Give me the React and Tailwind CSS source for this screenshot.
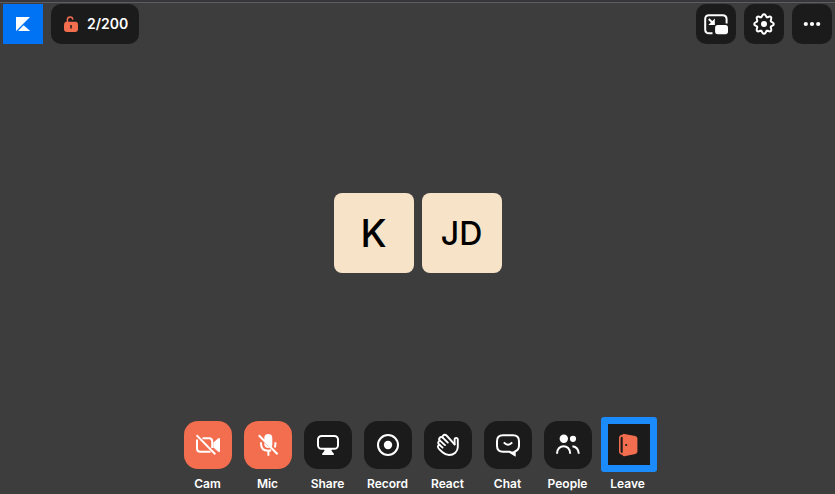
import clsx from 'clsx';

// ── Icons ──────────────────────────────────────────────────────────────────
const Icon = ({ children, className = 'w-6 h-6' }) => (
  <svg
    viewBox="0 0 24 24"
    fill="none"
    stroke="currentColor"
    strokeWidth="2"
    className={clsx('block shrink-0', className)}
    aria-hidden="true"
  >
    {children}
  </svg>
);

const CamOffIcon = () => (
  <Icon>
    <path d="M0.5 2.2 19.3 21.3" />
    <path d="M1 6.5V15.5Q1 18.7 4.2 18.7H14.5" />
    <path d="M6.5 5.3H13Q16.2 5.3 16.2 8.5V15" />
    <path d="M17.3 9.5 22.3 5.2Q24 4.3 24 6V18Q24 19.7 22.3 18.8L17.3 14.5Z" fill="currentColor" stroke="none" />
  </Icon>
);

const MicOffIcon = () => (
  <Icon>
    <path d="M8.3 7V5A4 4 0 0 1 16.3 5V12L15.8 14.2Z" fill="currentColor" stroke="none" />
    <path d="M8.3 9.5 13.8 15Q8.3 15.6 8.3 11Z" fill="currentColor" stroke="none" />
    <path d="M2.8 2.2 21.6 21.3" />
    <path d="M5 9.3V10.5Q5 17.7 12 17.7Q13.6 17.7 15 17.2M12.4 17.5V22.7M19.4 9.3V11Q19.4 13 18.6 14.5" />
  </Icon>
);

const ShareIcon = () => (
  <Icon>
    <rect x="2" y="3" width="20" height="12.8" rx="3.6" />
    <path d="M8.4 16H15.6V18L17.8 20.6V22H6.2V20.6L8.4 18Z" fill="currentColor" stroke="none" />
  </Icon>
);

const RecordIcon = () => (
  <Icon>
    <circle cx="12" cy="12" r="10" />
    <circle cx="12" cy="12" r="4.2" fill="currentColor" stroke="none" />
  </Icon>
);

const WaveIcon = () => (
  <Icon>
    <g strokeWidth="1.9" strokeLinecap="round" strokeLinejoin="round">
      <path d="M18.6 11.4 11 3Q8.8 0.9 7 2.6Q6 3.6 6.8 4.6L11.8 9.6" />
      <path d="M6.8 4.6Q5 3.2 3.6 4.8Q2.4 6 4 7.6L9 12.1" />
      <path d="M4 7.6Q2.6 7.8 2.2 9.4Q2 10.6 3.4 11.8L6.6 14.6" />
      <path d="M3.4 11.8Q1.8 12.2 1.9 13.8Q2 15 3.4 16.4L6.5 19.3Q9.5 22 13 22C18 22 21.8 18.5 21.8 14V6.5A1.6 1.6 0 0 0 18.6 6.5V11.4" />
    </g>
  </Icon>
);

const ChatIcon = () => (
  <Icon>
    <path d="M7 2.3H17Q23 2.3 23 8.3V12.8Q23 17 18.6 18.6V22L13.6 18.8H7Q1 18.8 1 12.8V8.3Q1 2.3 7 2.3Z" />
    <path d="M14 18.5H19.3V23Z" fill="currentColor" stroke="none" />
    <path d="M7.8 9.3Q12 14 16.2 9.3" />
  </Icon>
);

const PeopleIcon = () => (
  <Icon>
    <circle cx="7.8" cy="5.8" r="4.2" fill="currentColor" stroke="none" />
    <circle cx="17" cy="5.8" r="3.1" fill="currentColor" stroke="none" />
    <path d="M1 20.8C1 10.6 14.2 10.6 14.2 20.8M16.4 13.2Q22.4 14 22.8 20.8" />
  </Icon>
);

const LeaveIcon = () => (
  <Icon className="w-6 h-6 text-[#f36d4f]">
    <path d="M8 2.6H6.6Q3.8 2.6 3.8 5.4V18.2Q3.8 20.8 6.6 20.8H8" strokeWidth="1.6" />
    <path d="M8.4 0.9 19.4 3Q21.4 3.5 21.4 5.5V18.5Q21.4 20.4 19.4 20.9L8.4 23.2Q6.4 23.5 6.4 21.5V2.5Q6.4 0.6 8.4 0.9Z" fill="currentColor" stroke="none" />
    <path d="M5.7 4.5V19.5" stroke="#1b1b1b" strokeWidth="1.6" />
    <circle cx="10.2" cy="12" r="1.1" fill="#1b1b1b" stroke="none" />
  </Icon>
);

const PipIcon = () => (
  <Icon>
    <path d="M8.5 21.2H5Q1.2 21.2 1.2 17.4V7Q1.2 3.2 5 3.2H18.5Q22.6 3.2 22.6 7.2V11.4" />
    <path d="M4.8 7 9.8 12" />
    <path d="M10.8 6.6V13H4.4Z" fill="currentColor" stroke="none" />
    <rect x="11.1" y="13.1" width="12.9" height="9.1" rx="2.6" fill="currentColor" stroke="none" />
  </Icon>
);

const SettingsIcon = () => (
  <Icon>
    {[0, 45, 90, 135, 180, 225, 270, 315].map((angle) => (
      <path
        key={angle}
        d="M9.17 5.16C10.3 5 9.9 2.2 12 2.2C14.1 2.2 13.7 5 14.83 5.16"
        strokeLinecap="round"
        transform={`rotate(${angle} 12 12)`}
      />
    ))}
    <circle cx="12" cy="12" r="3" fill="currentColor" stroke="none" />
  </Icon>
);

const MoreIcon = () => (
  <Icon>
    <g fill="currentColor" stroke="none">
      <circle cx="5.8" cy="12" r="2.1" />
      <circle cx="12" cy="12" r="2.1" />
      <circle cx="18.2" cy="12" r="2.1" />
    </g>
  </Icon>
);

const UnlockIcon = () => (
  <svg viewBox="0 0 16 16" fill="none" className="block shrink-0 w-4 h-4 text-[#f36d4f]" aria-hidden="true">
    <path d="M4.4 7V3.8Q4.4 0.9 7.2 0.9Q9.6 0.9 9.9 3.6" stroke="currentColor" strokeWidth="1.5" />
    <path d="M3 5.8H13.2Q15 6.6 15 8.6V13Q15 16 12 16H4Q1 16 1 13V8.6Q1 6.6 3 5.8Z" fill="currentColor" />
    <path d="M8 9V12.6" stroke="#1b1b1b" strokeWidth="1.5" />
  </svg>
);

const Logo = () => (
  <svg viewBox="0 0 40 40" className="block w-10 h-10" role="img" aria-label="Home">
    <path d="M13 13H27L13 27Z" fill="#fff" />
    <path d="M20.6 21.2 27.2 27H15Z" fill="#fff" />
  </svg>
);

// ── Data ───────────────────────────────────────────────────────────────────
const headerActions = [
  { label: 'Picture in picture', icon: PipIcon },
  { label: 'Settings', icon: SettingsIcon },
  { label: 'More', icon: MoreIcon },
];

const participants = [
  { initials: 'K', size: 'text-[38px]' },
  { initials: 'JD', size: 'text-[32px]' },
];

const controls = [
  { label: 'Cam', icon: CamOffIcon, off: true },
  { label: 'Mic', icon: MicOffIcon, off: true },
  { label: 'Share', icon: ShareIcon },
  { label: 'Record', icon: RecordIcon },
  { label: 'React', icon: WaveIcon },
  { label: 'Chat', icon: ChatIcon },
  { label: 'People', icon: PeopleIcon },
  { label: 'Leave', icon: LeaveIcon, highlighted: true },
];

// ── Controls ───────────────────────────────────────────────────────────────
const ControlButton = ({ label, icon: Glyph, off, highlighted }) => (
  <button type="button" className="w-12 flex flex-col items-center gap-[7px]">
    <span
      className={clsx(
        'relative w-12 h-12 flex items-center justify-center rounded-[14px] text-white',
        off ? 'bg-[#f36d4f]' : 'bg-[#1b1b1b]'
      )}
    >
      {highlighted && (
        <span className="absolute -top-1 -bottom-[3px] -left-[3px] -right-[5px] rounded-[3px] border-[7px] border-[#1b8bfb] bg-[#1b1b1b]" />
      )}
      <span className="relative">
        <Glyph />
      </span>
    </span>
    <span className="text-xs leading-4 font-semibold text-white">{label}</span>
  </button>
);

const App = () => (
  <div className="min-h-screen flex flex-col bg-[#3d3d3d] border-t-2 border-[#37373b] font-['Inter',sans-serif] text-white">
    <header className="flex items-start justify-between border-t border-[#5c5c62] pt-px px-[3px]">
      <div className="flex gap-2">
        <a href="#home" className="bg-[#0073f4]">
          <Logo />
        </a>
        <button
          type="button"
          className="h-10 pl-3 pr-[11px] flex items-center gap-2 rounded-[10px] bg-[#1b1b1b] text-sm font-semibold"
        >
          <UnlockIcon />
          2/200
        </button>
      </div>
      <div className="flex gap-2">
        {headerActions.map(({ label, icon: Glyph }) => (
          <button
            key={label}
            type="button"
            aria-label={label}
            className="w-10 h-10 flex items-center justify-center rounded-[10px] bg-[#1b1b1b]"
          >
            <Glyph />
          </button>
        ))}
      </div>
    </header>

    <main className="flex-1 flex items-center justify-center gap-2">
      {participants.map(({ initials, size }) => (
        <div
          key={initials}
          className={clsx(
            'w-20 h-20 pt-0.5 flex items-center justify-center rounded-lg bg-[#f7e3c8] font-medium text-black',
            size
          )}
        >
          {initials}
        </div>
      ))}
    </main>

    <footer className="flex justify-center gap-3 pb-[2px]">
      {controls.map((control) => (
        <ControlButton key={control.label} {...control} />
      ))}
    </footer>
  </div>
);

export default App;
